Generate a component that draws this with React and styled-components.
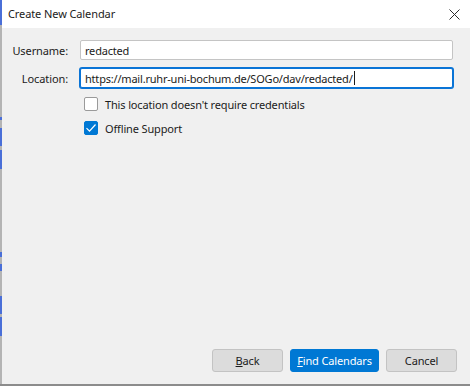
import React from "react";
import styled, { createGlobalStyle } from "styled-components";

const Global = createGlobalStyle`
  html, body { margin: 0; padding: 0; background: #f0f0f0; }
  body { font-family: "Noto Sans", "Open Sans", sans-serif; }
  * { box-sizing: border-box; }
`;

const Screen = styled.div`
  width: 470px;
  height: 386px;
  display: flex;
  flex-direction: column;
  overflow: hidden;
  background: #f0f0f0;
`;

const Main = styled.div`
  flex: 1;
  display: flex;
  min-height: 0;
`;

const Strip = styled.div`
  width: 2px;
  display: flex;
  flex-direction: column;
  background: #b4b4b4;
`;

const StripSeg = styled.div`
  height: ${(p) => p.$h}px;
  background: ${(p) => (p.$blue ? "#4a6fd8" : "#b4b4b4")};
`;

const Window = styled.div`
  flex: 1;
  display: flex;
  flex-direction: column;
  background: #f0f0f0;
`;

const TitleBar = styled.div`
  height: 28px;
  background: #ffffff;
  display: flex;
  align-items: center;
  justify-content: space-between;
  padding: 0 10px 0 6px;
`;

const Text = styled.span`
  font-size: 11px;
  letter-spacing: -0.15px;
  color: #1b1b1b;
`;

const Title = styled(Text)`
  letter-spacing: -0.1px;
  padding-bottom: 1px;
`;

const CloseBtn = styled.div`
  width: 11px;
  height: 11px;
  display: flex;
  margin-top: 1px;
`;

const Body = styled.div`
  flex: 1;
  display: flex;
  flex-direction: column;
  padding: 12px 13px 12px 0;
`;

const Form = styled.div`
  display: grid;
  grid-template-columns: 66px 1fr;
  column-gap: 12px;
  row-gap: 8px;
  align-items: center;
  padding-right: 4px;
`;

const Label = styled.label`
  font-size: 11px;
  letter-spacing: -0.1px;
  color: #1b1b1b;
  text-align: right;
`;

const Input = styled.div`
  height: 20px;
  background: #ffffff;
  border: 1px solid ${(p) => (p.$focused ? "#0a74d6" : "#c4c4c4")};
  box-shadow: ${(p) => (p.$focused ? "0 0 0 1px #0a74d6" : "none")};
  border-radius: 2px;
  font-size: 11px;
  letter-spacing: -0.2px;
  color: #1b1b1b;
  display: flex;
  align-items: center;
  padding: 0 4px;
  white-space: nowrap;
  overflow: hidden;
`;

const Caret = styled.span`
  display: inline-block;
  width: 1px;
  height: 14px;
  background: #1b1b1b;
  margin-left: 1px;
`;

const Checks = styled.div`
  display: flex;
  flex-direction: column;
  gap: 10px;
  padding-left: 82px;
  margin-top: 9px;
`;

const CheckRow = styled.div`
  display: flex;
  align-items: center;
  gap: 7px;
  height: 14px;
`;

const Box = styled.div`
  width: 14px;
  height: 14px;
  border-radius: 2px;
  border: 1px solid ${(p) => (p.$checked ? "#0078d4" : "#9a9a9a")};
  background: ${(p) => (p.$checked ? "#0078d4" : "#ffffff")};
  display: flex;
  align-items: center;
  justify-content: center;
`;

const Buttons = styled.div`
  margin-top: auto;
  display: flex;
  justify-content: flex-end;
  gap: 7px;
`;

const Button = styled.div`
  height: 23px;
  width: ${(p) => p.$w}px;
  border-radius: 3px;
  border: 1px solid ${(p) => (p.$primary ? "#0078d4" : "#c3c3c3")};
  background: ${(p) => (p.$primary ? "#0078d4" : "#dcdcdc")};
  color: ${(p) => (p.$primary ? "#ffffff" : "#1b1b1b")};
  font-size: 11px;
  letter-spacing: -0.15px;
  display: flex;
  align-items: center;
  justify-content: center;
`;

const BottomLine = styled.div`
  height: 2px;
  background: #8c8c8c;
`;

const segs = [
  [26, true], [96, false], [3, true], [8, false], [19, true], [4, false], [20, true],
  [86, false], [6, true], [7, false], [7, true], [26, false], [19, true], [3, false], [20, true], [50, false],
];

export default function App() {
  return (
    <>
      <Global />
      <Screen>
        <Main>
          <Strip>
            {segs.map(([h, b], i) => (
              <StripSeg key={i} $h={h} $blue={b} />
            ))}
          </Strip>
          <Window>
            <TitleBar>
              <Title>Create New Calendar</Title>
              <CloseBtn>
                <svg width="11" height="11" viewBox="0 0 11 11">
                  <path d="M0.5 0.5 L10.5 10.5 M10.5 0.5 L0.5 10.5" stroke="#2b2b2b" strokeWidth="1" fill="none" />
                </svg>
              </CloseBtn>
            </TitleBar>
            <Body>
              <Form>
                <Label>Username:</Label>
                <Input>redacted</Input>
                <Label>Location:</Label>
                <Input $focused>
                  https://mail.ruhr-uni-bochum.de/SOGo/dav/redacted/
                  <Caret />
                </Input>
              </Form>
              <Checks>
                <CheckRow>
                  <Box />
                  <Text>This location doesn't require credentials</Text>
                </CheckRow>
                <CheckRow>
                  <Box $checked>
                    <svg width="12" height="12" viewBox="0 0 12 12">
                      <path d="M1.5 6.2 L4.5 9.2 L10.5 2.5" stroke="#ffffff" strokeWidth="1.2" fill="none" />
                    </svg>
                  </Box>
                  <Text>Offline Support</Text>
                </CheckRow>
              </Checks>
              <Buttons>
                <Button $w={71}>
                  <span><u>B</u>ack</span>
                </Button>
                <Button $primary $w={89}>
                  <span><u>F</u>ind Calendars</span>
                </Button>
                <Button $w={71}>Cancel</Button>
              </Buttons>
            </Body>
          </Window>
        </Main>
        <BottomLine />
      </Screen>
    </>
  );
}
